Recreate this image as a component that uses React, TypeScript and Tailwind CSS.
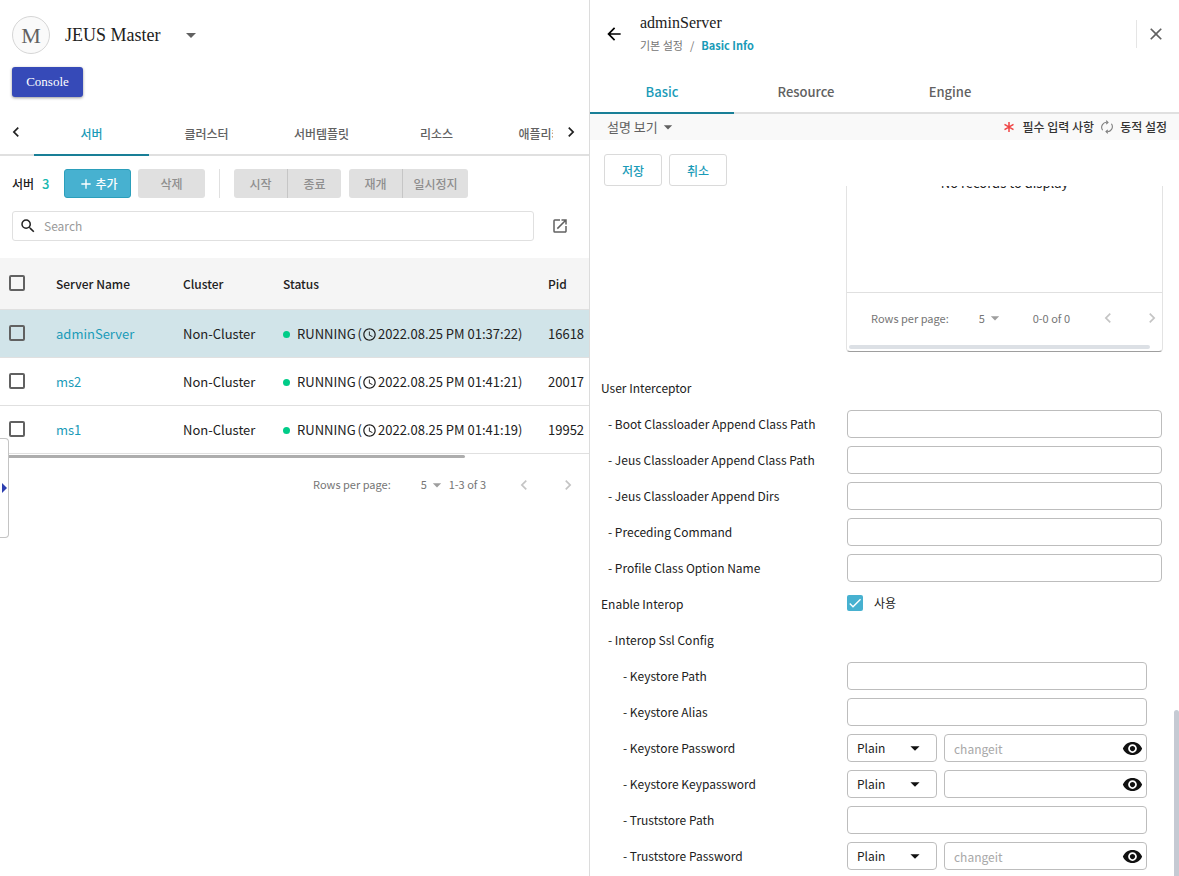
import React from "react";
import {
  MdAccessTime,
  MdAdd,
  MdArrowBack,
  MdArrowDropDown,
  MdArrowRight,
  MdCheck,
  MdChevronLeft,
  MdChevronRight,
  MdClose,
  MdOpenInNew,
  MdSearch,
  MdVisibility,
} from "react-icons/md";

const servers = [
  { name: "adminServer", time: "2022.08.25 PM 01:37:22", pid: "16618", selected: true },
  { name: "ms2", time: "2022.08.25 PM 01:41:21", pid: "20017", selected: false },
  { name: "ms1", time: "2022.08.25 PM 01:41:19", pid: "19952", selected: false },
];

const interceptorFields = [
  "Boot Classloader Append Class Path",
  "Jeus Classloader Append Class Path",
  "Jeus Classloader Append Dirs",
  "Preceding Command",
  "Profile Class Option Name",
];

const sslFields = [
  { label: "Keystore Path", secret: false, placeholder: "" },
  { label: "Keystore Alias", secret: false, placeholder: "" },
  { label: "Keystore Password", secret: true, placeholder: "changeit" },
  { label: "Keystore Keypassword", secret: true, placeholder: "" },
  { label: "Truststore Path", secret: false, placeholder: "" },
  { label: "Truststore Password", secret: true, placeholder: "changeit" },
];

const toId = (label: string) => label.toLowerCase().replace(/ /g, "-");

const fieldBox =
  "h-7 w-full min-w-0 rounded-[4px] border border-[#bdbdbd] bg-white px-[9px] text-xs text-[#212121] outline-none placeholder:text-[#a8a8a8]";

function RowCheckbox({ label }: { label: string }) {
  return (
    <input
      type="checkbox"
      aria-label={label}
      className="block size-4 appearance-none rounded-[2px] border-2 border-[#616161]"
    />
  );
}

function PageSize() {
  return (
    <span className="relative flex items-center">
      <select aria-label="Rows per page" className="w-6 appearance-none bg-transparent outline-none">
        <option>5</option>
      </select>
      <MdArrowDropDown className="pointer-events-none absolute left-1.5 size-5 text-[#9e9e9e]" />
    </span>
  );
}

function DynamicIcon() {
  return (
    <svg viewBox="0 0 14 14" className="size-[14px]" fill="none" stroke="#808080" strokeWidth="1.1">
      <path d="M2.6 10.2A5 5 0 0 1 7.6 2.4M6.2 0.6 8 2.4 6.2 4.2" />
      <path d="M11.4 3.8A5 5 0 0 1 6.4 11.6M7.8 9.8 6 11.6 7.8 13.4" />
    </svg>
  );
}

function ServerPanel() {
  return (
    <section className="relative flex min-w-0 flex-1 flex-col border-r border-[#dcdcdc]">
      <header className="flex items-center px-3 pt-4">
        <span className="flex size-[38px] items-center justify-center rounded-full border border-[#d6d6d6] bg-[#fafafa] font-['Liberation_Serif',serif] text-[22px] text-[#616161]">
          M
        </span>
        <h1 className="ml-[15px] font-['Liberation_Serif',serif] text-lg leading-6 text-[#212121]">JEUS Master</h1>
        <button type="button" aria-label="Select domain" className="ml-[18px] text-[#616161]">
          <MdArrowDropDown className="size-6" />
        </button>
      </header>
      <div className="px-3 pt-[13px]">
        <button
          type="button"
          className="block h-[30px] w-[71px] rounded-[3px] bg-[#364ab8] font-['Liberation_Serif',serif] text-[13px] text-white shadow-[0_1px_3px_rgba(0,0,0,0.4)]"
        >
          Console
        </button>
      </div>

      <nav className="mt-4 flex h-[43px] border-b-2 border-[#e0e0e0] text-xs font-medium text-[#616161]">
        <button type="button" aria-label="Previous tabs" className="flex w-[34px] shrink-0 items-center justify-center pr-0.5 pb-1 text-[#212121]">
          <MdChevronLeft className="size-5" />
        </button>
        <div className="-mb-[2px] flex min-w-0 flex-1 overflow-hidden">
          <button type="button" className="w-[115px] shrink-0 border-b-2 border-[#197f97] text-[#1a9bb8]">
            서버
          </button>
          <button type="button" className="w-[115px] shrink-0 pb-0.5">클러스터</button>
          <button type="button" className="w-[115px] shrink-0 pb-0.5">서버템플릿</button>
          <button type="button" className="w-[115px] shrink-0 pb-0.5">리소스</button>
          <button type="button" className="w-[115px] shrink-0 pb-0.5 whitespace-nowrap">애플리케이션</button>
        </div>
        <button type="button" aria-label="Next tabs" className="flex w-9 shrink-0 items-center justify-center pb-1 text-[#212121]">
          <MdChevronRight className="size-5" />
        </button>
      </nav>

      <div className="mt-[13px] flex h-[29px] items-center px-3 text-xs font-medium">
        <h2 className="text-[#212121]">서버</h2>
        <span className="ml-2 w-[22px] text-[13px] text-[#18b8b0]">3</span>
        <button
          type="button"
          className="flex h-full w-[67px] items-center justify-center gap-0.5 rounded-[3px] border border-[#2b9fbb] bg-[#47b1d0] text-white"
        >
          <MdAdd className="size-4" />
          추가
        </button>
        <button type="button" disabled className="ml-[7px] h-full w-[67px] rounded-[3px] bg-[#e0e0e0] text-[#8e8e8e]">
          삭제
        </button>
        <span className="mx-[14px] h-full w-px bg-[#e0e0e0]" />
        <div className="flex h-full overflow-hidden rounded-[3px] bg-[#e0e0e0] text-[#8e8e8e]">
          <button type="button" disabled className="w-[54px] border-r border-[#c6c6c6]">시작</button>
          <button type="button" disabled className="w-[53px]">종료</button>
        </div>
        <div className="ml-2 flex h-full overflow-hidden rounded-[3px] bg-[#e0e0e0] text-[#8e8e8e]">
          <button type="button" disabled className="w-[54px] border-r border-[#c6c6c6]">재개</button>
          <button type="button" disabled className="w-[65px]">일시정지</button>
        </div>
      </div>

      <div className="mt-[13px] flex items-center pr-5 pl-3">
        <div className="flex h-[30px] min-w-0 flex-1 items-center rounded-[3px] border border-[#e0e0e0] px-1.5">
          <MdSearch className="size-[18px] shrink-0 text-[#212121]" />
          <input
            type="search"
            aria-label="Search"
            placeholder="Search"
            className="ml-[7px] min-w-0 flex-1 text-xs outline-none placeholder:text-[#9a9a9a]"
          />
        </div>
        <button type="button" aria-label="Open in new window" className="ml-[17px] text-[#616161]">
          <MdOpenInNew className="size-[18px]" />
        </button>
      </div>

      <div className="mt-[17px] overflow-hidden">
        <table className="w-full table-fixed text-left text-[13px] whitespace-nowrap text-[#212121]">
          <colgroup>
            <col className="w-10" />
            <col className="w-[127px]" />
            <col className="w-[100px]" />
            <col />
            <col className="w-[57px]" />
          </colgroup>
          <thead>
            <tr className="h-[51px] border-b border-[#e0e0e0] bg-[#f5f5f5] text-xs text-[#212121]">
              <th className="pl-[9px]">
                <RowCheckbox label="Select all servers" />
              </th>
              <th className="pt-0.5 pl-4 font-medium">Server Name</th>
              <th className="pt-0.5 pl-4 font-medium">Cluster</th>
              <th className="pt-0.5 pl-4 font-medium">Status</th>
              <th className="pt-0.5 pl-4 font-medium">Pid</th>
            </tr>
          </thead>
          <tbody>
            {servers.map((server) => (
              <tr
                key={server.name}
                className={server.selected ? "h-12 border-b border-[#e0e0e0] bg-[#d1e4e9]" : "h-12 border-b border-[#e0e0e0]"}
              >
                <td className="pl-[9px]">
                  <RowCheckbox label={`Select ${server.name}`} />
                </td>
                <td className="pt-0.5 pl-4">
                  <a href="#server" className="text-[#1a9bb8]">
                    {server.name}
                  </a>
                </td>
                <td className="pt-0.5 pl-4">Non-Cluster</td>
                <td className="pt-0.5 pl-4">
                  <span className="flex items-center">
                    <span className="mr-[7px] size-[7px] rounded-full bg-[#00cc88]" />
                    <span>RUNNING</span>
                    <span className="ml-0.5">(</span>
                    <MdAccessTime className="mr-px size-[15px]" />
                    <span>{server.time})</span>
                  </span>
                </td>
                <td className="pt-0.5 pl-4">{server.pid}</td>
              </tr>
            ))}
          </tbody>
        </table>
        <div className="mt-px h-[3px] w-[79%] rounded-full bg-[#adadad]" />
      </div>

      <footer className="mt-[15px] flex h-6 items-center justify-end pr-[11px] text-[11px] text-[#757575]">
        <span className="mr-[30px]">Rows per page:</span>
        <PageSize />
        <span className="ml-1">1-3 of 3</span>
        <button type="button" disabled aria-label="Previous page" className="ml-7 text-[#c4c4c4]">
          <MdChevronLeft className="size-5" />
        </button>
        <button type="button" disabled aria-label="Next page" className="ml-6 text-[#c4c4c4]">
          <MdChevronRight className="size-5" />
        </button>
      </footer>

      <button
        type="button"
        aria-label="Expand menu"
        className="absolute top-[438px] left-0 flex h-[100px] w-[9px] items-center justify-center rounded-r-[4px] border border-l-0 border-[#c4c4c4] bg-white text-[#2c3eb0]"
      >
        <MdArrowRight className="size-6 shrink-0" />
      </button>
    </section>
  );
}

function FieldRow({ label, nested, children }: { label: string; nested?: boolean; children?: React.ReactNode }) {
  return (
    <div className={nested ? "flex h-9 items-center pr-8 pl-[33px]" : "flex h-9 items-center pr-[17px] pl-[18px]"}>
      <label htmlFor={toId(label)} className={nested ? "w-56 shrink-0" : "w-[239px] shrink-0"}>
        - {label}
      </label>
      {children}
    </div>
  );
}

function DetailPanel() {
  return (
    <section className="relative flex min-w-0 flex-1 flex-col">
      <header className="flex h-[72px] items-center pr-[13px] pb-[5px] pl-[14px]">
        <button type="button" aria-label="Back" className="text-black">
          <MdArrowBack className="size-5" />
        </button>
        <div className="ml-4 flex-1">
          <h2 className="font-['Liberation_Serif',serif] text-base leading-5 text-[#212121]">adminServer</h2>
          <p className="mt-[3px] flex gap-[7px] text-[11px] leading-[18px] text-[#757575]">
            <span>기본 설정</span>
            <span>/</span>
            <a href="#basic-info" className="font-bold text-[#1a9bb8]">
              Basic Info
            </a>
          </p>
        </div>
        <span className="mr-[9px] h-7 w-px bg-[#e5e5e5]" />
        <button type="button" aria-label="Close" className="text-[#616161]">
          <MdClose className="size-5" />
        </button>
      </header>

      <nav className="flex h-[42px] border-b-2 border-[#e0e0e0] text-[13px] font-medium text-[#616161]">
        <button type="button" className="-mb-[2px] w-36 border-b-2 border-[#197f97] text-[#1a9bb8]">
          Basic
        </button>
        <button type="button" className="w-36">Resource</button>
        <button type="button" className="w-36">Engine</button>
      </nav>

      <div className="flex h-[26px] items-center justify-between bg-[#f9f9f9] pr-3 pl-[17px] text-xs text-[#616161]">
        <button type="button" className="flex items-center text-[13px]">
          설명 보기
          <MdArrowDropDown className="size-5" />
        </button>
        <div className="flex items-center font-medium text-[#333]">
          <svg viewBox="0 0 10 10" className="mr-2 size-[10px]" stroke="#ef4444" strokeWidth="1.5">
            <path d="M5 0v10M0.5 2.3l9 5.4M9.5 2.3l-9 5.4" />
          </svg>
          <span className="mr-[6px]">필수 입력 사항</span>
          <DynamicIcon />
          <span className="ml-[6px]">동적 설정</span>
        </div>
      </div>

      <div className="flex gap-[7px] px-[14px] pt-[14px] text-xs font-medium text-[#1a9bb8]">
        <button type="button" className="h-8 w-[58px] rounded-[3px] border border-[#dadada] pt-0.5">저장</button>
        <button type="button" className="h-8 w-[58px] rounded-[3px] border border-[#dadada] pt-0.5">취소</button>
      </div>

      <div className="flex-1 overflow-hidden text-xs text-[#212121]">
        <div className="mr-4 ml-64 rounded-b-[4px] border-x border-b border-[#e3e3e3] border-b-[#9e9e9e]">
          <div className="flex h-[107px] flex-col border-b border-[#e0e0e0]">
            <p className="-mt-[13px] text-center text-[13px] leading-5">No records to display</p>
          </div>
          <div className="flex h-[50px] items-center justify-end text-[11px] text-[#757575]">
            <span className="mr-[30px]">Rows per page:</span>
            <PageSize />
            <span className="ml-[30px]">0-0 of 0</span>
            <button type="button" disabled aria-label="Previous page" className="ml-7 text-[#c4c4c4]">
              <MdChevronLeft className="size-5" />
            </button>
            <button type="button" disabled aria-label="Next page" className="ml-6 text-[#c4c4c4]">
              <MdChevronRight className="size-5" />
            </button>
          </div>
          <div className="mt-0.5 mr-3 mb-0.5 ml-0.5 h-1 rounded-full bg-[#dce0e5]" />
        </div>

        <h3 className="mt-[18px] flex h-9 items-center pl-[11px]">User Interceptor</h3>
        {interceptorFields.map((label) => (
          <FieldRow key={label} label={label}>
            <input id={toId(label)} type="text" className={fieldBox} />
          </FieldRow>
        ))}
        <div className="flex h-9 items-center pl-[11px]">
          <h3 className="w-[246px] shrink-0">Enable Interop</h3>
          <label className="flex items-center gap-[11px] pb-0.5">
            <span className="relative flex size-4 items-center">
              <input type="checkbox" defaultChecked className="size-4 appearance-none rounded-[2px] bg-[#47b1d0]" />
              <MdCheck className="pointer-events-none absolute inset-0 size-4 text-white" />
            </span>
            사용
          </label>
        </div>
        <h3 className="flex h-9 items-center pl-[18px]">- Interop Ssl Config</h3>
        {sslFields.map((field) => (
          <FieldRow key={field.label} label={field.label} nested>
            {field.secret && (
              <span className="relative mr-[7px] flex w-[90px] shrink-0 items-center">
                <select aria-label={`${field.label} encryption`} className={`${fieldBox} appearance-none`}>
                  <option>Plain</option>
                </select>
                <MdArrowDropDown className="pointer-events-none absolute right-[11px] size-[22px] text-[#111]" />
              </span>
            )}
            <span className="relative flex min-w-0 flex-1 items-center">
              <input
                id={toId(field.label)}
                type={field.secret ? "password" : "text"}
                placeholder={field.placeholder}
                className={fieldBox}
              />
              {field.secret && (
                <button type="button" aria-label={`Show ${field.label}`} className="absolute right-1 text-[#111]">
                  <MdVisibility className="size-[21px]" />
                </button>
              )}
            </span>
          </FieldRow>
        ))}
      </div>
      <div className="absolute right-0 bottom-0 h-[166px] w-[5px] rounded-t-full bg-[#c5cad3]" />
    </section>
  );
}

export default function App() {
  return (
    <main className="flex min-h-screen bg-white font-['Noto_Sans_CJK_KR',sans-serif]">
      <ServerPanel />
      <DetailPanel />
    </main>
  );
}
